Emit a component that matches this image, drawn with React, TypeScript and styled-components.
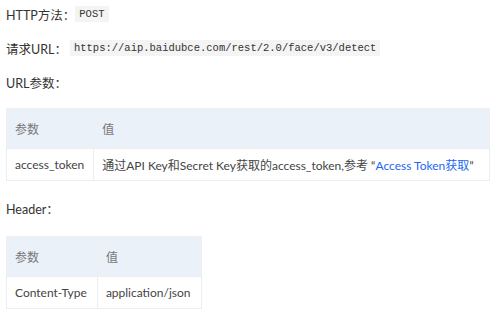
import { FC } from 'react';
import styled, { createGlobalStyle } from 'styled-components';

const GlobalStyle = createGlobalStyle`
    body {
        margin: 0;
        background: #fff;
        font-family: "Lato", "Noto Sans CJK SC", sans-serif;
        color: #333;
    }
`;

const Page = styled.div`
    padding: 4px 6px 0 6px;
    width: 499px;
    box-sizing: border-box;
`;

const Line = styled.div`
    display: flex;
    align-items: center;
    height: 20px;
    font-size: 12.5px;
    margin-bottom: ${(p: { $after?: number }) => p.$after ?? 14}px;
`;

const Code = styled.code`
    font-family: "Liberation Mono", "DejaVu Sans Mono", monospace;
    font-size: 10.5px;
    background: #f4f4f4;
    color: #333;
    padding: 2px 4px;
    margin-left: ${(p: { $gap?: number }) => p.$gap ?? 6}px;
`;

const Table = styled.table`
    border-collapse: collapse;
    font-size: 12px;
    margin: 0 0 17px 0;
    width: ${(p: { $width: number }) => p.$width}px;
    th, td {
        border: 1px solid #eeeeee;
        text-align: left;
        padding: 0 7px 0 8px;
        white-space: nowrap;
    }
    th {
        background: #eaf1f9;
        color: #777;
        font-weight: normal;
        height: 39px;
    }
    td {
        height: 31px;
        color: #444;
    }
`;

const Link = styled.a`
    color: #2468f2;
    text-decoration: none;
`;

const App: FC = () => {
    return (
        <Page>
            <GlobalStyle />
            <Line>
                HTTP方法：<Code $gap={0}>POST</Code>
            </Line>
            <Line>
                请求URL：<Code $gap={3}>https://aip.baidubce.com/rest/2.0/face/v3/detect</Code>
            </Line>
            <Line $after={16}>URL参数：</Line>
            <Table $width={484}>
                <thead>
                    <tr>
                        <th>参数</th>
                        <th>值</th>
                    </tr>
                </thead>
                <tbody>
                    <tr>
                        <td>access_token</td>
                        <td>
                            通过API Key和Secret Key获取的access_token,参考 “<Link>Access Token获取</Link>”
                        </td>
                    </tr>
                </tbody>
            </Table>
            <Line $after={18}>Header：</Line>
            <Table $width={196}>
                <thead>
                    <tr>
                        <th>参数</th>
                        <th>值</th>
                    </tr>
                </thead>
                <tbody>
                    <tr>
                        <td>Content-Type</td>
                        <td>application/json</td>
                    </tr>
                </tbody>
            </Table>
        </Page>
    );
};

export default App;
